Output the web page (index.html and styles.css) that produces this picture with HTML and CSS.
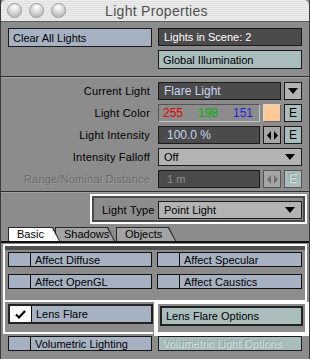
FILE: index.html
```html
<!DOCTYPE html>
<html lang="en">
<head>
    <meta charset="UTF-8">
    <title>Light Properties</title>
    <link rel="stylesheet" href="styles.css">
</head>
<body>
<div class="window">
    <div class="titlebar">
        <div class="lights"><span></span><span></span><span></span></div>
        <div class="title">Light Properties</div>
    </div>

    <div class="sec top">
        <div class="btn blue big">Clear All Lights</div>
        <div class="col">
            <div class="fld dark">Lights in Scene: 2</div>
            <div class="btn teal big">Global Illumination</div>
        </div>
    </div>
    <div class="sep"></div>

    <div class="sec props">
        <div class="lbl">Current Light</div>
        <div class="ctl">
            <div class="fld dark grow blue-text">Flare Light</div>
            <div class="sbtn gray"><i class="tri"></i></div>
        </div>

        <div class="lbl">Light Color</div>
        <div class="ctl">
            <div class="fld inset grow rgb"><span class="r">255</span><span class="g">198</span><span class="b">151</span></div>
            <div class="swatch"></div>
            <div class="sbtn teal">E</div>
        </div>

        <div class="lbl">Light Intensity</div>
        <div class="ctl">
            <div class="fld dark grow blue-text num">100.0 %</div>
            <div class="sbtn mid">
                <svg width="11" height="9" viewBox="0 0 11 9"><polygon points="4,0 4,9 0,4.5" fill="#000"/><polygon points="7,0 7,9 11,4.5" fill="#000"/></svg>
            </div>
            <div class="sbtn teal">E</div>
        </div>

        <div class="lbl">Intensity Falloff</div>
        <div class="ctl">
            <div class="fld light grow drop">Off<i class="tri"></i></div>
        </div>

        <div class="lbl off">Range/Nominal Distance</div>
        <div class="ctl">
            <div class="fld dark grow dim num">1 m</div>
            <div class="sbtn mid dis">
                <svg width="11" height="9" viewBox="0 0 11 9"><polygon points="4,0 4,9 0,4.5" fill="#6e6e6e"/><polygon points="7,0 7,9 11,4.5" fill="#6e6e6e"/></svg>
            </div>
            <div class="sbtn teal dis">E</div>
        </div>
    </div>
    <div class="sep"></div>

    <div class="sec lower">
        <div class="ltype">
            <div class="ltype-in">
                <span class="ltype-lbl">Light Type</span>
                <div class="fld light drop ltype-fld">Point Light<i class="tri"></i></div>
            </div>
        </div>

        <div class="tabs">
            <div class="tab active"><span>Basic</span></div>
            <div class="tab"><span>Shadows</span></div>
            <div class="tab"><span>Objects</span></div>
        </div>

        <div class="panel">
            <div class="hl-box">
                <div class="checks">
                    <div class="chk"><span class="box"></span><span class="txt">Affect Diffuse</span></div>
                    <div class="chk"><span class="box"></span><span class="txt">Affect Specular</span></div>
                    <div class="chk"><span class="box"></span><span class="txt">Affect OpenGL</span></div>
                    <div class="chk"><span class="box"></span><span class="txt">Affect Caustics</span></div>
                </div>
            </div>
            <div class="hl-row">
                <div class="hl-left">
                    <div class="chk tall"><span class="box on">
                        <svg width="13" height="11" viewBox="0 0 13 11"><path d="M2 5.5 L5 8.5 L11 2" fill="none" stroke="#000" stroke-width="2.2"/></svg>
                    </span><span class="txt">Lens Flare</span></div>
                </div>
                <div class="hl-right">
                    <div class="btn teal opt">Lens Flare Options</div>
                </div>
            </div>
            <div class="vol">
                <div class="chk"><span class="box"></span><span class="txt">Volumetric Lighting</span></div>
                <div class="btn teal dis-btn">Volumetric Light Options</div>
            </div>
        </div>
    </div>
</div>
</body>
</html>
```

FILE: styles.css
```css
body {
    margin: 0;
    padding: 0;
    background: #c9d6e6;
    font-family: "Liberation Sans", Arial, sans-serif;
    font-size: 11px;
    color: #000;
}

.window {
    width: 308px;
    height: 359px;
    background: #8c8c8c;
    border-left: 1px solid #3a3a3a;
    border-right: 1px solid #3a3a3a;
    overflow: hidden;
}

/* title bar */
.titlebar {
    height: 21px;
    border-bottom: 1px solid #5a5a5a;
    background: repeating-linear-gradient(#ececec 0 1px, #e1e1e1 1px 2px);
    display: flex;
    align-items: center;
    border-radius: 5px 5px 0 0;
}

.lights {
    display: flex;
    gap: 7px;
    padding-left: 6px;
}

.lights span {
    width: 13px;
    height: 13px;
    border-radius: 50%;
    border: 1px solid #9a9a9a;
    background: radial-gradient(circle at 50% 25%, #ffffff 0, #e2e2e2 35%, #bdbdbd 75%, #d8d8d8 100%);
}

.title {
    flex: 1;
    text-align: center;
    font-size: 14px;
    color: #505050;
    padding-right: 62px;
    letter-spacing: 0.3px;
}

/* generic controls */
.btn, .fld, .sbtn {
    box-sizing: border-box;
    height: 18px;
    border: 1px solid #1a1a1a;
    display: flex;
    align-items: center;
    white-space: nowrap;
    min-width: 0;
}

.btn {
    padding-left: 4px;
}

.big {
    height: 19px;
}

.blue {
    background: #a6b2c2;
}

.teal {
    background: #a9bdbd;
}

.fld {
    padding-left: 5px;
}

.dark {
    background: #4b4b4b;
    color: #fff;
}

.blue-text {
    color: #c9d8f2;
    font-size: 12px;
}

.light {
    background: #b3b3b3;
}

.inset {
    background: #8c8c8c;
    border-color: #555 #c4c4c4 #c4c4c4 #555;
}

.grow {
    flex: 1;
}

.num {
    padding-left: 8px;
}

.dim {
    color: #8e8e8e;
}

.sbtn {
    width: 18px;
    flex: none;
    justify-content: center;
    font-size: 12px;
}

.gray {
    background: #b3b3b3;
}

.mid {
    background: #a6a6a6;
}

.sbtn.dis {
    border-color: #555;
}

.sbtn.teal.dis {
    color: #d6e4e4;
    text-shadow: -1px -1px 0 #8a9a9a;
}

.tri {
    width: 0;
    height: 0;
    border-left: 5px solid transparent;
    border-right: 5px solid transparent;
    border-top: 6px solid #000;
}

.drop {
    justify-content: space-between;
    padding-right: 6px;
}

/* sections */
.sep {
    height: 1px;
    border-top: 1px solid #2e2e2e;
    background: #a4a4a4;
}

.sec.top {
    display: grid;
    grid-template-columns: 144px 144px;
    column-gap: 6px;
    padding: 6px 0 6px 7px;
    height: 42px;
}

.col {
    display: flex;
    flex-direction: column;
    gap: 4px;
}

.sec.props {
    display: grid;
    grid-template-columns: 149px 144px;
    column-gap: 8px;
    row-gap: 4px;
    padding: 4px 0 3px 0;
    grid-auto-rows: 18px;
}

.lbl {
    text-align: right;
    line-height: 18px;
    letter-spacing: 0.2px;
}

.lbl.off {
    color: #6a6a6a;
    text-shadow: 1px 1px 0 #9e9e9e;
}

.ctl {
    display: flex;
    gap: 3px;
}

.rgb {
    padding-left: 4px;
    font-size: 12px;
}

.rgb span {
    width: 35px;
}

.rgb span.b {
    width: auto;
}

.r { color: #e00000; }
.g { color: #00b400; }
.b { color: #2020e0; }

.swatch {
    box-sizing: border-box;
    width: 18px;
    height: 18px;
    flex: none;
    background: #ffc896;
    border: 1px solid;
    border-color: #d8d8d8 #666 #666 #d8d8d8;
}

/* lower part */
.sec.lower {
    padding-top: 1px;
}

.ltype {
    margin-left: 89px;
    width: 217px;
    box-sizing: border-box;
    border: 2px solid #fff;
}

.ltype-in {
    border: 2px solid #4a4a4a;
    padding: 3px 1px 1px 8px;
    display: flex;
    align-items: center;
    justify-content: space-between;
}

.ltype-lbl {
    letter-spacing: 0.2px;
}

.ltype-fld {
    width: 144px;
}

.tabs {
    display: flex;
    margin: 3px 0 0 7px;
    height: 14px;
}

.tab {
    background: #2a2a2a;
    clip-path: polygon(0 0, calc(100% - 7px) 0, 100% 100%, 0 100%);
    padding: 1px 1px 0 1px;
    width: 58px;
    margin-right: 1px;
}

.tab span {
    display: block;
    height: 13px;
    line-height: 13px;
    background: #a4a4a4;
    clip-path: polygon(0 0, calc(100% - 7px) 0, 100% 100%, 0 100%);
    padding-left: 8px;
}

.tab.active {
    width: 50px;
    margin-right: -5px;
    z-index: 1;
}

.tab.active span {
    background: #fff;
}

.panel {
    border-top: 2px solid #111;
    padding: 1px 0 0 2px;
}

.hl-box {
    border: 2px solid #fff;
    width: 300px;
    height: 54px;
}

.checks {
    border-top: 4px solid #505050;
    display: grid;
    grid-template-columns: 144px 145px;
    column-gap: 5px;
    row-gap: 7px;
    padding: 2px 0 0 3px;
}

.chk {
    box-sizing: border-box;
    height: 15px;
    border: 1px solid #111;
    background: #a6b2c2;
    display: flex;
    align-items: center;
}

.chk .box {
    width: 21px;
    height: 100%;
    border-right: 1px solid #111;
    display: flex;
    align-items: center;
    justify-content: center;
}

.chk .box.on {
    background: #fff;
}

.chk .txt {
    padding-left: 4px;
}

.chk.tall {
    height: 20px;
    border-width: 2px;
    border-color: #222;
}

.hl-row {
    display: flex;
}

.hl-left {
    width: 148px;
    height: 28px;
    border-left: 2px solid #fff;
    border-bottom: 2px solid #fff;
    padding: 2px 0 0 3px;
}

.hl-left .chk {
    width: 145px;
}

.hl-right {
    width: 150px;
    height: 26px;
    border: 2px solid #fff;
    border-width: 2px 4px 4px 4px;
    margin-left: 1px;
    padding: 2px 2px 0 2px;
}

.opt {
    height: 20px;
    border: 2px solid #222;
}

.vol {
    display: grid;
    grid-template-columns: 144px 144px;
    column-gap: 6px;
    padding-left: 5px;
}

.dis-btn {
    height: 15px;
    color: #d2e0e0;
    text-shadow: -1px -1px 0 #8c9e9e;
}
```
